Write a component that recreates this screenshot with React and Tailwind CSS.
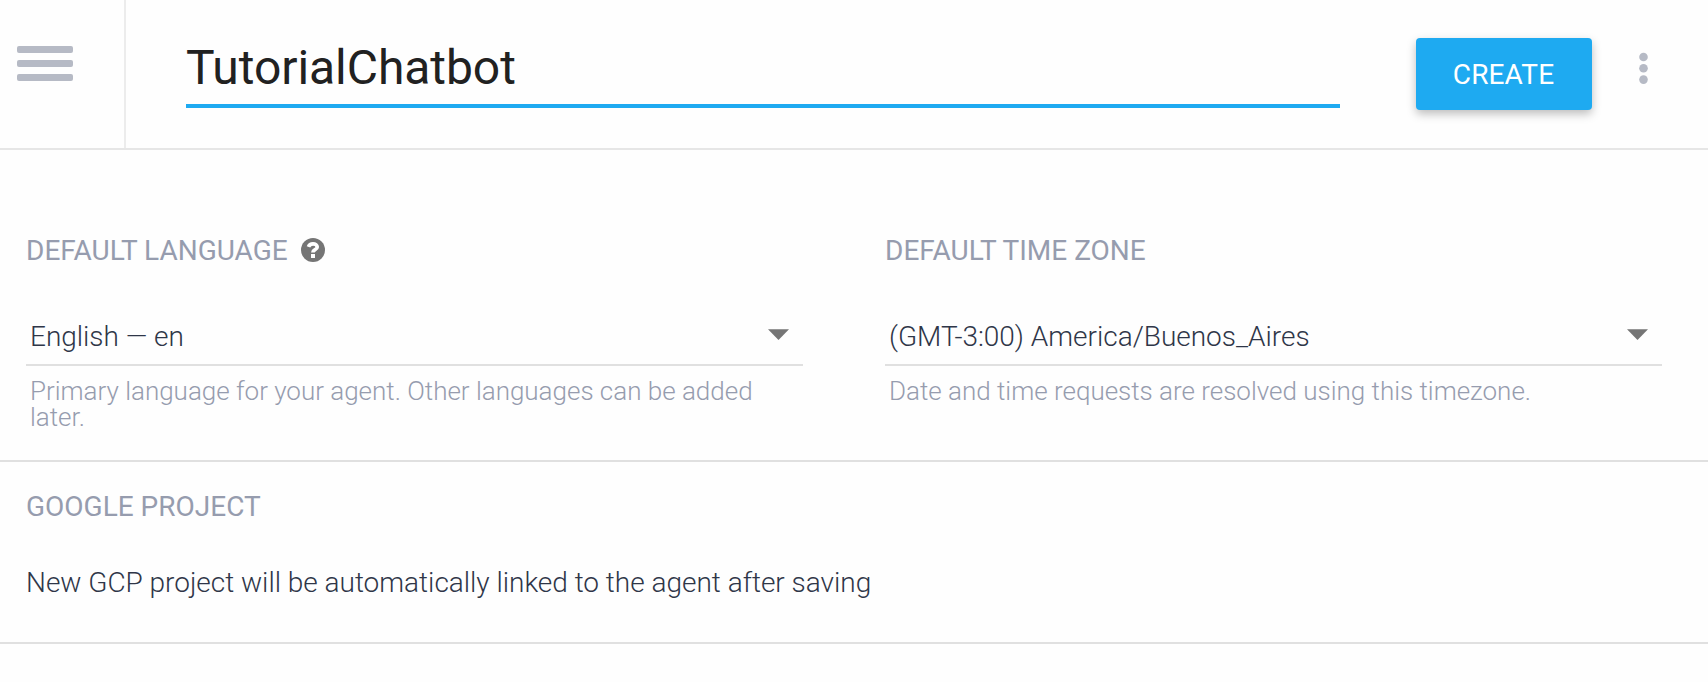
function SectionLabel({ children }) {
  return <h2 className="text-[28px] leading-[34px] font-normal text-[#969cae] whitespace-nowrap">{children}</h2>;
}

function HelpIcon() {
  return (
    <svg className="mb-0.5 size-6" viewBox="0 0 24 24">
      <circle cx="12" cy="12" r="12" fill="#757575" />
      <path d="M7.500 8.900C8.200 7 9.800 5.900 12 5.900c2.400 0 4.200 1.200 4.200 3.100 0 2.900-4.300 2.400-4.300 5.400" fill="none" stroke="#fff" strokeWidth="3.700" />
      <rect x="10" y="16" width="4" height="4" fill="#fff" />
    </svg>
  );
}

function SelectField({ label, icon, value, help }) {
  return (
    <div className="w-[777px]">
      <div className="flex items-center gap-[13px]">
        <SectionLabel>{label}</SectionLabel>
        {icon}
      </div>
      <div className="mt-[50px] flex h-12 justify-between border-b-2 border-[#e0e0e0] pr-[14px] pl-1">
        <span className="text-[28px] leading-[38px] font-light tracking-[-0.015px] text-[#2f3648]">{value}</span>
        <svg className="mt-[11px] h-[11px] w-[21px]" viewBox="0 0 21 11">
          <path d="M0 .3h21L10.500 11z" fill="#757575" />
        </svg>
      </div>
      <p className="mt-3 pr-6 pl-1 text-[26px] leading-[26px] font-light tracking-[-0.015px] text-[#969cae]">{help}</p>
    </div>
  );
}

export default function App() {
  return (
    <div className="h-[682px] w-[1708px] overflow-hidden bg-[#fefefe] font-['Roboto',sans-serif]">
      <header className="flex h-[150px] border-b-2 border-[#e6e6e6]">
        <button aria-label="Menu" className="flex w-[126px] flex-col gap-[7px] border-r-2 border-[#ececec] pt-[46px] pl-[17px]">
          <span className="h-[7px] w-14 rounded-[2px] bg-[#b6bac5]" />
          <span className="h-[7px] w-14 rounded-[2px] bg-[#b6bac5]" />
          <span className="h-[7px] w-14 rounded-[2px] bg-[#b6bac5]" />
        </button>
        <div className="mt-10 ml-[60px] h-[68px] w-[1154px] border-b-4 border-[#1eaaf1]">
          <h1 className="text-[48px] leading-[56px] font-normal tracking-[-0.06px] text-[#212121]">TutorialChatbot</h1>
        </div>
        <button className="mt-[38px] ml-[76px] h-[72px] w-[176px] rounded bg-[#1eaaf1] pt-0.5 pr-px text-[28px] leading-8 tracking-[0.15px] text-white shadow-[0_4px_10px_rgba(0,0,0,0.26)]">
          CREATE
        </button>
        <button aria-label="More" className="mt-[52px] ml-[47px] h-8 w-[9px]">
          <svg className="h-8 w-[9px]" viewBox="0 0 9 32" fill="#b6bac5">
            <circle cx="4.500" cy="5" r="4.300" />
            <circle cx="4.500" cy="16.300" r="4.300" />
            <circle cx="4.500" cy="27.600" r="4.300" />
          </svg>
        </button>
      </header>
      <section className="flex h-[312px] gap-[82px] border-b-2 border-[#e0e0e0] pt-[84px] pl-[26px]">
        <SelectField
          label="DEFAULT LANGUAGE"
          icon={<HelpIcon />}
          value="English — en"
          help="Primary language for your agent. Other languages can be added later."
        />
        <SelectField
          label="DEFAULT TIME ZONE"
          value="(GMT-3:00) America/Buenos_Aires"
          help="Date and time requests are resolved using this timezone."
        />
      </section>
      <section className="h-[182px] border-b-2 border-[#e0e0e0] pt-7 pl-[26px]">
        <SectionLabel>GOOGLE PROJECT</SectionLabel>
        <p className="mt-[42px] text-[28px] leading-[34px] font-light tracking-[-0.015px] text-[#2f3648]">
          New GCP project will be automatically linked to the agent after saving
        </p>
      </section>
    </div>
  );
}
